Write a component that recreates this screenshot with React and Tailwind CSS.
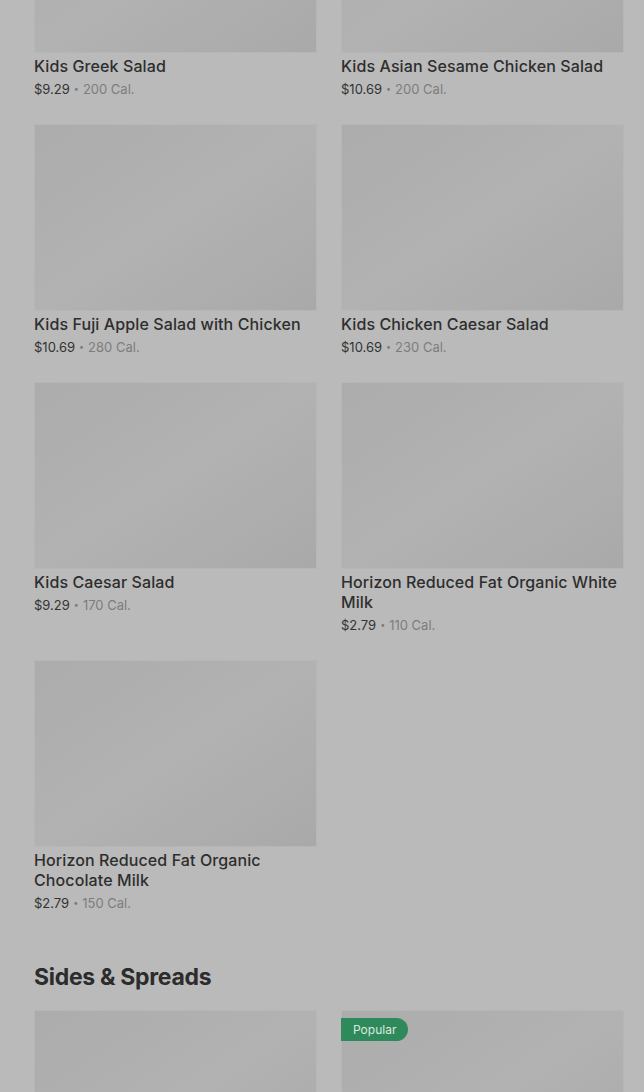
const kids = [
    { name: 'Kids Greek Salad', price: '$9.29', cal: '200 Cal.' },
    { name: 'Kids Asian Sesame Chicken Salad', price: '$10.69', cal: '200 Cal.' },
    { name: 'Kids Fuji Apple Salad with Chicken', price: '$10.69', cal: '280 Cal.' },
    { name: 'Kids Chicken Caesar Salad', price: '$10.69', cal: '230 Cal.' },
    { name: 'Kids Caesar Salad', price: '$9.29', cal: '170 Cal.' },
    { name: 'Horizon Reduced Fat Organic White Milk', price: '$2.79', cal: '110 Cal.' },
    { name: 'Horizon Reduced Fat Organic Chocolate Milk', price: '$2.79', cal: '150 Cal.' },
];

const sides = [
    { name: 'Side 1', popular: false },
    { name: 'Side 2', popular: true },
];

const ItemCard = ({ item }) => (
    <div className="flex flex-col">
        <div className="h-[187px] bg-gradient-to-br from-[#acacac] via-[#b2b2b2] to-[#a9a9a9] border border-[#b6b6b6]" />
        <h3 className="mt-[3px] text-[16px] leading-5 font-medium text-[#2e2e2e] tracking-[0.1px]">{item.name}</h3>
        <div className="mt-[3px] text-[13px] leading-5 flex items-center gap-1">
            <span className="text-[#333]">{item.price}</span>
            <span className="text-[#7a7a7a] text-[9px]">•</span>
            <span className="text-[#7d7d7d]">{item.cal}</span>
        </div>
    </div>
);

export default function App() {
    return (
        <div className="min-h-screen w-[644px] h-[1092px] overflow-hidden bg-[#bababa]" style={{ fontFamily: 'Inter, "Liberation Sans", sans-serif' }}>
            <div className="-mt-[134px] pl-[34px] pr-[20px]">
                <div className="grid grid-cols-2 gap-x-6 gap-y-[25px]">
                    {kids.map((item) => (
                        <ItemCard key={item.name} item={item} />
                    ))}
                </div>

                <h2 className="mt-[48px] text-[23px] leading-8 font-bold text-[#2c2c2c] tracking-[-0.3px]">Sides &amp; Spreads</h2>

                <div className="mt-[17px] grid grid-cols-2 gap-x-6">
                    {sides.map((s) => (
                        <div key={s.name} className="relative h-[187px] bg-gradient-to-br from-[#acacac] via-[#b2b2b2] to-[#a9a9a9] border border-[#b6b6b6]">
                            {s.popular && (
                                <span className="absolute -left-px top-[7px] h-[23px] px-3 flex items-center rounded-r-full bg-[#2f8a5b] text-[12px] text-[#d9ebdf]">
                                    Popular
                                </span>
                            )}
                        </div>
                    ))}
                </div>
            </div>
        </div>
    );
}
